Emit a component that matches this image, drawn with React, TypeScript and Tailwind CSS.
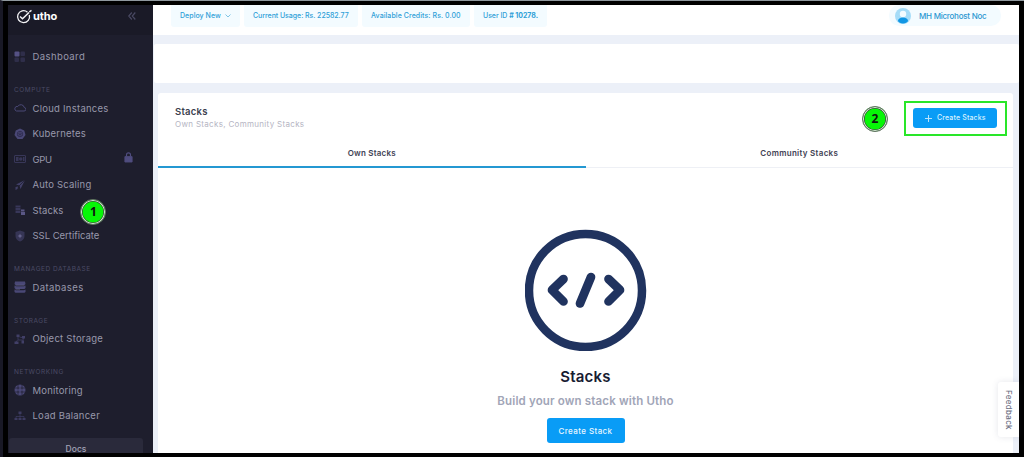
import type { ReactNode } from "react";

const ICON = "#4a4876";

function Svg({ children, className = "" }: { children: ReactNode; className?: string }) {
  return (
    <svg viewBox="0 0 24 24" className={`h-3 w-3 ${className}`} fill={ICON}>
      {children}
    </svg>
  );
}

const icons: Record<string, ReactNode> = {
  dashboard: (
    <Svg>
      <rect x="1" y="1" width="10" height="10" rx="2" fill="#555184" />
      <g opacity=".4">
        <rect x="13" y="1" width="9" height="9" rx="2" />
        <rect x="1" y="13" width="9" height="9" rx="2" />
        <rect x="13" y="13" width="9" height="9" rx="2" />
      </g>
    </Svg>
  ),
  cloud: (
    <Svg>
      <path d="M5 18h15a3.500 3.500 0 0 0 .5-7A7 7 0 0 0 7.500 9 4.500 4.500 0 0 0 5 18Z" fill="none" stroke={ICON} strokeWidth="2" />
    </Svg>
  ),
  kubernetes: (
    <Svg>
      <path d="M12 1l8.500 4L23 14l-6 8H7l-6-8L3.500 5Z" />
      <circle cx="12" cy="12" r="5.500" fill="none" stroke="#2c2a4c" strokeWidth="1.500" />
      <path d="M12 6v12M7 10l10 5M17 10l-10 5" stroke="#2c2a4c" strokeWidth="1.200" />
    </Svg>
  ),
  gpu: (
    <Svg className="opacity-60">
      <rect x="1" y="5" width="22" height="14" rx="1" fill="none" stroke={ICON} strokeWidth="2" />
      <path d="M4 8h5v8H4zM18 8h3v8h-3z" />
      <circle cx="13.500" cy="12" r="3.500" />
    </Svg>
  ),
  scaling: (
    <Svg className="opacity-80">
      <path d="M22 2 13 20l-2-7-7-2ZM3 16l5-1-1 5-4 2Z" />
      <path d="M22 2 9 15" stroke="#1e1e2d" strokeWidth="1.500" />
    </Svg>
  ),
  stacks: (
    <Svg>
      <path d="M3 3h10v4H3zM3 8h10v4H3zM3 13h10v5H3z" opacity=".6" />
      <path d="M14 11h7v4h-7zM14 16h8v6h-8z" fill="#5a5785" />
    </Svg>
  ),
  ssl: (
    <Svg>
      <path d="M12 1l9 3v8c0 6-4 9-9 11-5-2-9-5-9-11V4Z" opacity=".55" />
      <path d="M12 7l1.500 3.500L17 12l-3.500 1.500L12 17l-1.500-3.500L7 12l3.500-1.500Z" fill="#68658f" />
    </Svg>
  ),
  database: (
    <Svg>
      <path d="M2 1h20l1 5-2 2H3L1 6ZM1 9l3 1.500h16L23 9v5l-2 2H3l-2-2ZM1 17l3 1.500h16l3-1.500v5l-2 1.500H3L1 22Z" />
      <path d="M3 8.500h18M3 16.500h9" stroke="#77749e" strokeWidth="1" />
    </Svg>
  ),
  storage: (
    <Svg className="opacity-80">
      <path d="M5 3h6v5H5zM16 6h6v5h-6zM1 17h8v5H1zM15 15h5v6h-5z" />
      <path d="M8 8v5l-4 5M11 8l8 2-2 8M8 14h9" fill="none" stroke={ICON} strokeWidth="1.500" />
    </Svg>
  ),
  monitoring: (
    <Svg>
      <circle cx="12" cy="12" r="11" />
      <path d="M2 8h20M2 16h20M8 2v20M16 2v20" stroke="#1e1e2d" strokeWidth="1.300" />
      <path d="M12 2v20M2 12h20" stroke={ICON} strokeWidth="2" />
    </Svg>
  ),
  balancer: (
    <Svg className="opacity-70">
      <path d="M9 3h6v5H9zM1 16h6v4H1zM9 16h6v4H9zM17 16h6v4h-6z" />
      <path d="M12 8v9M4 17v-4h16v4" fill="none" stroke={ICON} strokeWidth="1.500" />
    </Svg>
  ),
};

function Item({ icon, label, track, children }: { icon: string; label: string; track: string; children?: ReactNode }) {
  return (
    <div className="flex h-[25.5px] shrink-0 items-center pl-1.5">
      <span className="w-[18.500px]">{icons[icon]}</span>
      <span className={`mt-px text-[9.5px] leading-3 whitespace-nowrap text-[#9898ab] ${track}`}>{label}</span>
      {children}
    </div>
  );
}

function Heading({ children }: { children: ReactNode }) {
  return (
    <div className="flex h-[26px] shrink-0 items-end pl-1.5 text-[6.5px] leading-[9px] tracking-[0.54px] text-[#4b4b65]">
      {children}
    </div>
  );
}

function Logo() {
  return (
    <div className="flex items-center">
      <svg viewBox="0 0 17 15" className="h-[15px] w-[17px]" fill="none" stroke="#f4f4f6">
        <path d="M11.500 3.200A6 6 0 1 0 13.300 6" strokeWidth="1.300" />
        <path d="M4 7.500 6.500 9.700 13 3.500" strokeWidth="1.500" />
        <path d="M13.300 2.800 15.500 1.300" strokeWidth="1.400" />
      </svg>
      <span className="text-[11px] leading-3 font-bold tracking-[-0.1px] text-white">utho</span>
    </div>
  );
}

function Sidebar() {
  return (
    <aside className="flex w-[145px] shrink-0 flex-col overflow-hidden bg-[#1e1e2d]">
      <div className="flex h-[30px] shrink-0 items-center justify-between bg-[#1a1a27] pr-[17px] pb-[8px] pl-[8px]">
        <Logo />
        <svg viewBox="0 0 8 8" className="h-2 w-2" fill="none" stroke="#494963" strokeWidth="1.200">
          <path d="M3.800.500.800 4l3 3.500M7.300.500 4.300 4l3 3.500" />
        </svg>
      </div>
      <nav className="flex flex-col pt-[8.750px]">
        <Item icon="dashboard" label="Dashboard" track="tracking-[0.4px]" />
        <Heading>COMPUTE</Heading>
        <Item icon="cloud" label="Cloud Instances" track="tracking-[0.25px]" />
        <Item icon="kubernetes" label="Kubernetes" track="tracking-[0.2px]" />
        <Item icon="gpu" label="GPU" track="tracking-[-0.3px]">
          <svg viewBox="0 0 10 12" className="mr-5 mb-1 ml-auto h-[11px] w-[9px]" fill="#4f4c7e">
            <path d="M1 5h8v6H1z" stroke="#4f4c7e" strokeLinejoin="round" />
            <path d="M2.800 5V3a2.200 2.200 0 0 1 4.400 0v2" fill="none" stroke="#4f4c7e" strokeWidth="1.300" />
          </svg>
        </Item>
        <Item icon="scaling" label="Auto Scaling" track="tracking-[0.2px]" />
        <Item icon="stacks" label="Stacks" track="tracking-[0.1px]">
          <span className="mt-[3px] ml-[17px]">
            <Badge>1</Badge>
          </span>
        </Item>
        <Item icon="ssl" label="SSL Certificate" track="tracking-[-0.02px]" />
        <Heading>MANAGED DATABASE</Heading>
        <Item icon="database" label="Databases" track="tracking-[0.4px]" />
        <Heading>STORAGE</Heading>
        <Item icon="storage" label="Object Storage" track="tracking-[0.24px]" />
        <Heading>NETWORKING</Heading>
        <Item icon="monitoring" label="Monitoring" track="tracking-[0.2px]" />
        <Item icon="balancer" label="Load Balancer" track="tracking-[0.24px]" />
      </nav>
      <div className="mt-2.5 mr-2.5 ml-px flex grow justify-center rounded-t-[3px] bg-[#2a2a3b] pt-[7px] text-[8.5px] leading-[8px] font-medium text-[#a2a3b7]">
        Docs
      </div>
    </aside>
  );
}

function Badge({ children }: { children: ReactNode }) {
  return (
    <span className="flex h-[26px] w-[26px] shrink-0 items-center justify-center rounded-full border border-[#6b6b6b] bg-[#07f607] font-['Open_Sans',sans-serif] text-[12px] leading-none font-bold text-[#111] shadow-[inset_0_0_0_1px_#d6f5d6,inset_0_0_0_1.500px_#333]">
      {children}
    </span>
  );
}

function Chip({ children, className }: { children: ReactNode; className: string }) {
  return (
    <div className={`flex h-[22px] items-center rounded-b-[3px] bg-[#f3fbff] text-[7px] font-medium whitespace-nowrap text-[#2fa0d8] ${className}`}>
      {children}
    </div>
  );
}

function TopBar() {
  return (
    <header className="flex h-[30px] shrink-0 items-start bg-white pl-[18px]">
      <Chip className="mr-1 w-[69px] pl-[9px] tracking-[0.05px]">
        Deploy New
        <svg viewBox="0 0 6 4" className="ml-1 h-1 w-1.5" fill="none" stroke="#7fc4e5">
          <path d="m.500.500 2.500 2.500L5.500.500" />
        </svg>
      </Chip>
      <Chip className="mr-1 w-[114px] pl-[9px] tracking-[-0.04px]">Current Usage: Rs. 22582.77</Chip>
      <Chip className="mr-1 w-[108px] pl-[9px] tracking-[0.08px]">Available Credits: Rs. 0.00</Chip>
      <Chip className="w-[73px] gap-[2px] pl-[9px] tracking-[-0.05px]">
        User ID <b className="font-bold"># 10278.</b>
      </Chip>
      <div className="mr-[18px] ml-auto flex h-[21px] w-[112px] items-center rounded-[10px] bg-[#f3fbff] pl-1.5">
        <svg viewBox="0 0 16 16" className="mt-px h-4 w-4">
          <circle cx="8" cy="8" r="8" fill="#a5dcf8" />
          <circle cx="8" cy="6" r="3.200" fill="#f3fbff" />
          <ellipse cx="8" cy="12.500" rx="5" ry="3" fill="#1196e4" />
        </svg>
        <span className="ml-2 text-[8px] leading-3 font-medium tracking-[-0.25px] whitespace-nowrap text-[#2b98d2]">MH Microhost Noc</span>
      </div>
    </header>
  );
}

function StacksCard() {
  return (
    <section className="mt-2.5 mr-[6px] ml-[5px] flex grow flex-col rounded-t-[3px] bg-white">
      <div className="flex h-[50px] shrink-0 items-center pl-[17px]">
        <div className="whitespace-nowrap">
          <h1 className="text-[9.5px] leading-[13px] font-semibold tracking-[0.25px] text-[#3c3f4f]">Stacks</h1>
          <p className="text-[8px] leading-[13px] tracking-[0.31px] text-[#b5b5c3]">Own Stacks, Community Stacks</p>
        </div>
        <div className="mr-[6px] ml-auto flex items-center gap-4">
          <div className="mt-0.5">
            <Badge>2</Badge>
          </div>
          <div className="flex h-[35px] w-[103px] items-center border-2 border-[#29e629] pl-[7px]">
            <button className="flex h-5 w-[84px] items-center rounded-[3px] bg-[#099cf6] pl-3 text-[7px] font-medium tracking-[0.15px] whitespace-nowrap text-[#d9f1ff]">
              <svg viewBox="0 0 7 7" className="mr-[5px] h-[7px] w-[7px]" stroke="#b9e2fb">
                <path d="M3.500 0v7M0 3.500h7" />
              </svg>
              Create Stacks
            </button>
          </div>
        </div>
      </div>
      <div className="grid h-[25px] shrink-0 grid-cols-2 border-b border-[#eef0f5] text-center text-[8px] leading-[20px] font-semibold tracking-[0.2px] text-[#3f4254]">
        <div className="h-[25px] border-b-2 border-[#2498d2]">Own Stacks</div>
        <div className="tracking-[0.3px]">Community Stacks</div>
      </div>
      <div className="flex flex-col items-center pt-[61px]">
        <svg viewBox="0 0 122 122" className="h-[122px] w-[122px]" fill="none" stroke="#20335f" strokeLinecap="round" strokeLinejoin="round">
          <circle cx="60.500" cy="61.500" r="56.500" strokeWidth="8.500" />
          <path d="M38.500 50 27 61l11.500 11.500M83.500 50 95 61 83.500 72.500M66 48 55 74.500" strokeWidth="8.700" />
        </svg>
        <h2 className="mt-4 text-[15px] leading-5 font-semibold tracking-[0.2px] text-[#181c32]">Stacks</h2>
        <p className="mt-[5px] text-[11.5px] leading-[18px] font-semibold tracking-[0.16px] whitespace-nowrap text-[#a1a5b7]">
          Build your own stack with Utho
        </p>
        <button className="mt-2 h-[25px] w-[78px] rounded-[3px] bg-[#099cf6] text-[8px] font-medium tracking-[0.4px] whitespace-nowrap text-[#e8f6ff]">
          Create Stack
        </button>
      </div>
    </section>
  );
}

export default function App() {
  return (
    <div className="relative flex h-[457px] w-[1024px] overflow-hidden border-t border-l-[3px] border-t-[#8f989e] border-l-[#191926] bg-black font-[Inter,sans-serif]">
      <div className="flex grow overflow-hidden border-t-4 border-r-[5px] border-b-[4px] border-l-[5px] border-black">
        <Sidebar />
        <main className="flex min-w-0 grow flex-col bg-[#ecf0f8]">
          <TopBar />
          <div className="mt-[9px] ml-px h-[39px] shrink-0 rounded-[2px] bg-white" />
          <StacksCard />
        </main>
      </div>
      <div className="absolute top-[381px] right-[5px] flex h-[55px] w-[21px] items-center justify-center rounded-l-[3px] bg-white text-[8px] font-medium tracking-[0.3px] text-[#6d7084] shadow-[0_0_6px_rgba(80,90,120,0.15)] [writing-mode:vertical-rl]">
        Feedback
      </div>
    </div>
  );
}
